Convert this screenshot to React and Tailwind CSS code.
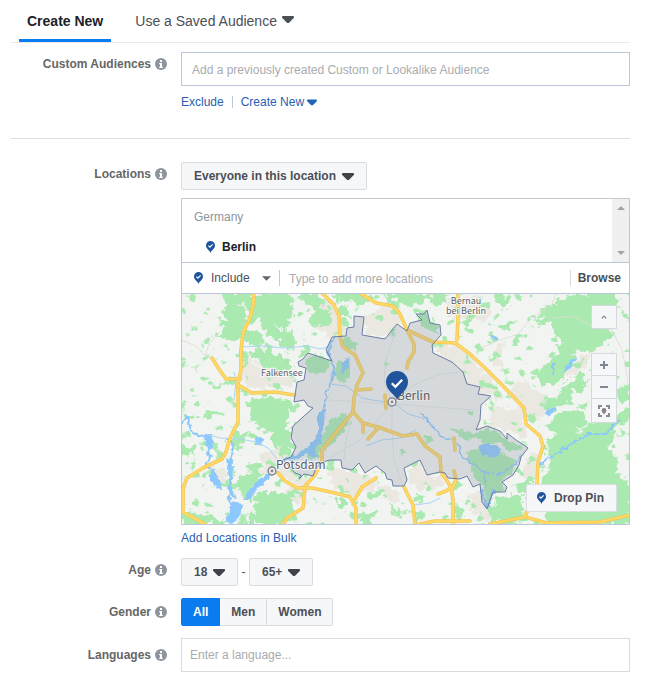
import React from "react";

const woods = [
  "222,293 290,293 293,306 291,320 282,327 268,326 258,321 252,324 248,310 240,303 226,306",
  "226,302 242,306 248,316 243,330 262,334 267,342 258,346 234,341 214,336 228,326 224,312",
  "262,322 276,328 292,330 298,346 288,353 278,342 264,330",
  "252,348 262,346 272,354 284,360 296,366 284,371 262,366 254,358",
  "296,293 318,293 326,302 320,310 326,320 318,328 308,322 314,308 300,300",
  "318,312 330,310 333,324 322,324",
  "248,400 262,396 286,400 296,406 290,412 250,410",
  "248,408 288,408 288,440 286,458 276,450 270,432 258,426 250,418",
  "291,456 306,462 314,474 298,478 286,468",
  "274,428 288,436 292,452 284,458 276,446",
  "241,473 256,466 264,472 256,484 250,500 246,500 236,486",
  "184,510 198,514 222,518 226,524 184,524",
  "182,444 194,448 190,458 182,456",
  "262,492 282,492 296,502 290,518 284,524 248,524 254,506",
  "232,432 246,434 240,448 232,444",
  "340,293 372,293 376,300 366,306 352,300 330,302",
  "340,304 352,310 350,316 340,318",
  "380,293 426,293 430,300 412,306 394,300",
  "428,296 448,293 446,300 434,306",
  "500,295 512,298 512,306 502,304 494,299",
  "508,322 516,324 506,330 498,328",
  "568,296 592,293 622,293 614,304 606,316 612,332 606,346 590,350 570,354 562,364 558,350 560,340 552,324 534,322 548,308",
  "554,356 574,354 568,370 560,384 550,388 532,374 544,366",
  "578,374 590,380 582,390 570,396 562,404 552,404 562,390",
  "544,400 554,396 560,404 550,412 542,408",
  "614,394 629,382 629,400 618,402",
  "545,442 560,432 584,428 600,420 629,410 629,420 616,428 608,446 620,462 618,476 629,484 629,524 545,524 542,484 548,464",
  "562,412 582,410 590,422 572,430 552,434 550,424",
  "478,432 496,430 508,438 518,446 500,446 482,444",
  "496,496 512,492 522,500 524,518 508,524 494,518",
  "514,484 532,478 530,492 520,494",
  "492,504 500,512 496,522 488,522",
  "453,507 466,510 464,518 454,516",
  "356,512 372,514 378,520 362,522",
  "390,506 398,508 402,516 392,516",
  "366,494 374,492 376,498 370,500",
  "416,494 420,494 424,500 418,502",
  "334,500 344,500 348,504 338,508",
];

const cityWoods = [
  "306,358 316,354 330,361 326,372 312,374 306,368",
  "340,338 348,338 358,344 356,350 348,350 340,344",
  "338,360 350,362 350,376 340,384 334,374",
  "330,420 346,412 350,424 334,442 324,452 322,438",
  "318,436 324,442 318,458 306,460 306,454",
  "391,330 396,328 395,337 390,336",
  "419,312 426,310 430,320 438,326 438,334 426,328 418,320",
  "450,428 462,430 476,434 490,428 484,438 464,440",
  "478,432 494,430 508,440 524,448 510,452 500,442 484,444",
  "466,452 480,448 500,452 516,460 512,474 500,482 504,490 494,492 486,504 484,488 474,476",
  "424,436 432,436 434,441 426,442",
  "470,410 474,412 472,416 468,414",
  "399,448 405,451 402,455",
  "384,362 388,364 385,368",
];

const towns = [
  "246,353 258,366 296,374 292,386 250,390 240,376",
  "310,293 330,300 346,324 346,335 330,338 318,328 320,310",
  "364,318 384,306 400,306 402,322 384,336 364,334",
  "446,300 480,296 490,312 484,322 450,316",
  "440,342 462,346 484,372 506,398 482,396 464,382 440,356",
  "516,378 548,396 548,410 532,424 520,410 510,392",
  "492,406 520,410 526,440 506,430 488,424",
  "260,454 284,444 300,474 312,484 304,490 284,476 262,472",
  "290,484 308,490 304,504 288,498",
  "206,470 224,466 228,484 214,486",
  "330,462 342,470 360,474 376,476 374,490 352,494 332,488",
  "408,468 420,462 426,476 440,476 446,488 424,490 410,482",
  "376,484 396,490 402,504 388,502",
  "478,490 492,510 486,522 472,512 468,494",
  "532,452 540,456 534,478 520,476 526,462",
  "495,340 504,342 500,368 494,366",
  "566,366 586,356 588,366 570,378",
];

const lakes = [
  "205,434 212,434 214,448 208,450",
  "210,468 216,474 222,486 218,490 210,480",
  "226,458 233,462 232,486 236,500 228,492 229,478",
  "230,502 243,504 240,516 232,524 226,520 230,512",
  "256,438 263,438 262,446 255,444",
  "300,452 314,442 318,432 318,414 325,408 324,424 322,440 314,450 316,458 306,454 290,462 292,456",
  "274,470 270,478 260,488 248,500 244,500 248,492 256,482 266,474",
  "478,446 488,443 498,446 502,452 494,457 482,455",
  "341,370 344,361 350,357 348,366 343,374",
  "552,362 555,362 554,374 552,374",
  "572,360 578,358 570,368 564,374 566,366",
  "546,412 555,406 556,410 549,416",
  "492,337 499,338 498,340 492,340",
];

const rivers = [
  "181,424 188,416 190,428 197,436 205,436 208,450 210,458 206,464 214,470",
  "228,440 233,442 231,456 230,464 231,478 229,500 236,510 234,522",
  "334,337 328,352 332,361 334,374 330,384",
  "283,460 294,458 306,450 314,442",
  "482,490 484,500 487,508 494,490",
  "540,464 552,456 562,450 574,442 590,434 606,434 614,424 619,420",
];

const streams = [
  "240,347 262,346 284,348 308,346 320,349 332,346",
  "205,434 220,438 240,439 256,442 268,448 278,460",
  "234,400 236,380 234,372",
  "330,384 346,386 354,392 362,398 372,400 386,402 398,406 408,414 422,418",
  "366,446 382,440 400,438 416,430",
  "330,376 338,374 342,370",
  "414,505 430,503 440,498",
];

const spree = [
  "422,414 430,424 440,436 452,440 458,444 462,456 476,466 484,472 486,486",
  "484,472 500,474 516,464 520,456",
  "330,384 326,396 324,410",
];

const motorways = [
  "254,293 253,306 250,318 243,333 241,350 241,370 238,384 238,405 238,422 230,438 226,452 222,459 203,468 187,478 183,488 183,512 205,524",
  "212,358 219,369 226,379 240,379",
  "240,386 252,393 275,392 294,395",
  "322,293 334,305 339,316 340,337 343,347 355,355 363,373 357,385 354,398 353,412 330,440 322,450 322,462 315,475 305,486 303,508 287,518 283,524",
  "357,390 371,389",
  "360,293 376,303 393,306 400,314 407,330 433,342 455,343 470,354 485,368 505,388 524,408 526,424 540,436 543,446 538,462 537,485 525,517 490,524",
  "525,517 547,523 600,522 630,515",
  "407,330 414,344 414,352 408,362 407,368",
  "458,295 458,318 457,340",
  "353,412 363,423 378,427 403,436 417,434 425,446 440,457 441,472 451,487 453,500 453,524",
  "363,423 363,432",
  "378,428 368,439",
  "454,471 456,480 452,490",
  "452,487 446,491 438,494",
  "404,487 413,505 415,523",
  "278,473 285,481 297,488 312,488 335,493 350,497 356,508 356,524",
  "355,499 362,487 376,478",
  "420,524 435,521 470,521",
  "385,395 386,408",
  "454,438 455,450",
];

const lanes = [
  "181,340 196,346 205,356 212,358",
  "205,356 210,342 220,332",
  "480,348 500,340 518,334 530,320 552,304 556,293",
  "552,318 572,316 592,326 612,330 622,350 628,380",
];

const streets = [
  "352,420 346,440 344,460",
  "392,404 392,430 394,460 402,484",
  "392,404 412,386 440,374 462,372",
  "392,404 420,406 446,408 476,410",
  "330,400 360,402 392,404",
  "392,404 384,380 386,360 396,330",
  "330,458 360,440 392,404",
];

const cityBorder =
  "332,337 326,350 332,361 308,353 303,359 298,362 299,366 306,368 304,380 297,382 294,402 304,400 308,406 313,408 293,426 291,438 296,447 291,457 283,460 290,467 295,473 301,475 299,479 304,474 313,476 316,468 323,462 330,460 341,460 342,468 352,470 359,463 365,473 376,466 385,473 387,479 392,480 393,486 404,486 407,480 404,468 420,460 427,475 440,472 445,473 448,478 460,479 467,476 473,487 480,484 482,502 487,509 493,492 505,492 507,487 502,482 513,475 519,465 521,457 528,448 516,440 507,433 507,439 500,431 487,426 476,430 480,420 481,405 491,396 485,395 478,394 480,387 467,384 463,372 452,362 433,353 432,345 441,335 440,325 430,323 427,310 424,314 416,314 422,320 410,323 407,331 397,324 385,339 362,335 364,317 354,316 354,327 347,328 346,336";

function Lines({ items, ...rest }) {
  return (
    <g fill="none" strokeLinejoin="round" strokeLinecap="round" {...rest}>
      {items.map((p) => (
        <polyline key={p} points={p} />
      ))}
    </g>
  );
}

function Shapes({ items, ...rest }) {
  return (
    <g {...rest}>
      {items.map((p) => (
        <polygon key={p} points={p} />
      ))}
    </g>
  );
}

function Town({ x, y }) {
  return (
    <g>
      <circle cx={x} cy={y} r="3.9" fill="#eceef0" stroke="#85878b" strokeWidth="1.5" />
      <circle cx={x} cy={y} r="1.4" fill="#85878b" />
    </g>
  );
}

function BerlinMap() {
  return (
    <svg
      role="img"
      aria-label="Map of Berlin"
      viewBox="182 294 447 230"
      preserveAspectRatio="xMidYMid slice"
      className="block h-[230px] w-full"
    >
      <defs>
        <filter id="rough" x="-5%" y="-5%" width="110%" height="110%">
          <feTurbulence type="fractalNoise" baseFrequency="0.13" numOctaves="3" seed="4" />
          <feDisplacementMap in="SourceGraphic" scale="15" xChannelSelector="R" yChannelSelector="G" />
        </filter>
        <filter id="shore" x="-5%" y="-5%" width="110%" height="110%" colorInterpolationFilters="sRGB">
          <feTurbulence type="fractalNoise" baseFrequency="0.2" numOctaves="2" seed="9" />
          <feDisplacementMap in="SourceGraphic" scale="6" xChannelSelector="R" yChannelSelector="G" />
        </filter>
        <filter id="groves" x="0" y="0" width="100%" height="100%" colorInterpolationFilters="sRGB">
          <feTurbulence type="fractalNoise" baseFrequency="0.08 0.1" numOctaves="3" seed="21" />
          <feColorMatrix values="0 0 0 0 0.667  0 0 0 0 0.918  0 0 0 0 0.694  14 0 0 0 -8.7" />
        </filter>
      </defs>
      <rect x="181" y="293" width="449" height="232" fill="#f2f4f2" />
      <Shapes items={towns} fill="#ebe7e1" filter="url(#rough)" />
      <rect x="181" y="293" width="449" height="232" filter="url(#groves)" />
      <Shapes items={woods} fill="#aaeab1" filter="url(#rough)" />
      <polygon points={cityBorder} fill="#f1f2f0" />
      <Shapes items={cityWoods} fill="#aaeab1" filter="url(#shore)" />
      <Lines items={lanes} stroke="#dedbd6" strokeWidth="0.8" />
      <Lines items={streets} stroke="#dddcdb" strokeWidth="0.7" />
      <Shapes items={lakes} fill="#8cc8fb" filter="url(#shore)" />
      <Lines items={rivers} stroke="#8cc8fb" strokeWidth="2.2" filter="url(#shore)" />
      <Lines items={spree} stroke="#8cc8fb" strokeWidth="1.7" filter="url(#shore)" />
      <Lines items={streams} stroke="#a9d5f8" strokeWidth="1" />
      <Lines items={motorways} stroke="#f3c552" strokeWidth="3.6" />
      <Lines items={motorways} stroke="#ffd866" strokeWidth="2.2" />
      <polygon points={cityBorder} fill="#8898a6" fillOpacity="0.27" stroke="#6a7da3" strokeWidth="1" strokeLinejoin="round" />
      <Town x={392} y={402} />
      <Town x={272} y={471} />
      <g
        fill="#5b5e68"
        stroke="#fff"
        strokeOpacity="0.75"
        strokeWidth="2"
        paintOrder="stroke"
        fontFamily="'Noto Sans CJK SC', 'Noto Sans', sans-serif"
      >
        <text x="397" y="400" fontSize="12" strokeOpacity="0.3">Berlin</text>
        <text x="276" y="469" fontSize="12">Potsdam</text>
        <text x="261" y="376" fontSize="9">Falkensee</text>
        <text x="466" y="304" fontSize="9" textAnchor="middle">Bernau</text>
        <text x="466" y="314" fontSize="9" textAnchor="middle">bei Berlin</text>
      </g>
      <path d="M397 400c-2-6-11-9-11-18a11 11 0 0 1 22 0c0 9-9 12-11 18z" fill="#20549c" />
      <path d="M391.800 383.300l3.600 3.600 6.800-7.200" fill="none" stroke="#fff" strokeWidth="2.300" />
    </svg>
  );
}

function Caret({ className = "" }) {
  return (
    <svg viewBox="0 0 12 7" aria-hidden="true" className={`h-[7px] w-3 shrink-0 fill-current ${className}`}>
      <path d="M1 0h10q1 0 1 1v.8L7.300 6.400q-1.300 1-2.600 0L0 1.800V1q0-1 1-1z" />
    </svg>
  );
}

function Pin() {
  return (
    <svg viewBox="0 0 9 12" aria-hidden="true" className="h-3 w-[9px] shrink-0">
      <path d="M4.500 12C3.600 9 0 8 0 4.500a4.500 4.500 0 0 1 9 0C9 8 5.400 9 4.500 12z" fill="#20549c" />
      <path d="M2.400 4.700l1.500 1.500 2.700-2.900" fill="none" stroke="#fff" strokeWidth="1.200" />
    </svg>
  );
}

function Info() {
  return (
    <svg viewBox="0 0 12 12" aria-hidden="true" className="h-3 w-3 shrink-0">
      <circle cx="6" cy="6" r="6" fill="#8d949e" />
      <path d="M5 2h2v2H5zM4.200 5H7v3.700h.8V10H4.200V8.700H5V6.200h-.8z" fill="#fff" />
    </svg>
  );
}

function Row({ label, htmlFor, offset = "pt-1", children }) {
  const Tag = htmlFor ? "label" : "div";
  return (
    <div className="flex gap-[14px]">
      <div className={`w-[156px] shrink-0 ${offset}`}>
        <Tag htmlFor={htmlFor} className="flex items-center justify-end gap-1 font-bold leading-4 text-[#666]">
          {label}
          <Info />
        </Tag>
      </div>
      <div className="min-w-0 flex-1">{children}</div>
    </div>
  );
}

function Dropdown({ id, label, options, width }) {
  return (
    <span className="relative inline-flex text-[#4b4f56]">
      <select
        id={id}
        aria-label={label}
        className={`h-7 appearance-none rounded-[2px] border border-[#d9dbe0] bg-[#f6f7f9] pl-3 font-bold ${width}`}
      >
        {options.map((o) => (
          <option key={o}>{o}</option>
        ))}
      </select>
      <Caret className="pointer-events-none absolute right-[13px] top-[11px] text-[#3f434a]" />
    </span>
  );
}

export default function App() {
  return (
    <main className="bg-white pb-[18px] pl-[11px] pr-[15px] font-['Liberation_Sans',Arial,sans-serif] text-[12px] leading-4 text-[#4b4f56]">
      <nav className="flex h-[43px] items-end gap-4 border-b border-[#e9eaec] pl-2 text-[14px]">
        <button className="h-[42px] border-b-[3px] border-[#0a7cf0] px-2 pt-[2px] font-bold text-[#1d2129]">
          Create New
        </button>
        <button className="flex h-[42px] items-center gap-[5px] border-b-[3px] border-transparent px-2 pt-[2px]">
          Use a Saved Audience
          <Caret className="mb-[2px]" />
        </button>
      </nav>

      <section className="border-b border-[#dcdee3] pb-7 pt-[9px]">
        <Row label="Custom Audiences" htmlFor="audiences">
          <input
            id="audiences"
            placeholder="Add a previously created Custom or Lookalike Audience"
            className="block h-[34px] w-full border border-[#bdc7dc] px-[10px] pt-[2px] placeholder:text-[#a9abaf]"
          />
          <div className="mt-2 flex h-4 items-center text-[#2a5db0]">
            <a href="#exclude">Exclude</a>
            <span className="ml-2 mr-2 h-3 border-l border-[#bdc7dc]" />
            <button className="flex items-center gap-[3px]">
              Create New
              <Caret className="h-[6px] w-[10px] text-[#1f66b8]" />
            </button>
          </div>
        </Row>
      </section>

      <section className="flex flex-col gap-3 pt-[23px]">
        <Row label="Locations" htmlFor="scope">
          <Dropdown id="scope" options={["Everyone in this location", "People who live here"]} width="w-[186px]" />
          <div className="mt-2 border border-[#bdc7dc] border-t-[#c6c9ce]">
            <div className="flex h-[63px]">
              <ul className="flex-1 pl-3 pt-[10px]">
                <li className="text-[#90949c]">
                  Germany
                  <ul className="pl-3 pt-[14px]">
                    <li className="flex items-center gap-[7px] font-bold text-[#1d2129]">
                      <Pin />
                      Berlin
                    </li>
                  </ul>
                </li>
              </ul>
              <div className="flex w-[17px] flex-col items-center justify-between bg-[#f0f0f0] py-[7px] text-[#a3a3a3]">
                <svg viewBox="0 0 8 4" className="h-1 w-2 fill-current" aria-hidden="true">
                  <path d="M0 4h8L4 0z" />
                </svg>
                <svg viewBox="0 0 8 4" className="h-1 w-2 fill-current" aria-hidden="true">
                  <path d="M0 0h8L4 4z" />
                </svg>
              </div>
            </div>
            <div className="flex h-8 items-center border-y border-[#bdc7dc] pl-3 pr-2">
              <Pin />
              <span className="relative inline-flex">
                <select aria-label="Include or exclude" className="h-5 w-[68px] appearance-none bg-transparent pl-2">
                  <option>Include</option>
                  <option>Exclude</option>
                </select>
                <svg
                  viewBox="0 0 10 5"
                  aria-hidden="true"
                  className="pointer-events-none absolute right-0 top-2 h-[5px] w-[9px] fill-[#606770]"
                >
                  <path d="M0 0h10L5 5z" />
                </svg>
              </span>
              <span className="ml-2 h-4 border-l border-[#c3c9d6]" />
              <input
                aria-label="Add locations"
                placeholder="Type to add more locations"
                className="h-5 min-w-0 flex-1 px-[9px] pt-[2px] placeholder:text-[#a9abaf]"
              />
              <button className="h-4 border-l border-[#d5d8de] pl-[7px] font-bold leading-4 text-[#4b4f56]">Browse</button>
            </div>
            <div className="relative overflow-hidden">
              <BerlinMap />
              <div className="absolute right-3 top-[11px] border border-[#d5d8de]">
                <button aria-label="Collapse map" className="flex h-[22px] w-6 items-center justify-center bg-[#f6f7f9]">
                  <svg viewBox="0 0 6 4" className="h-1 w-[6px]" aria-hidden="true">
                    <path d="M.7 3.300L3 1l2.300 2.300" fill="none" stroke="#7f8794" strokeWidth="1.200" />
                  </svg>
                </button>
              </div>
              <div className="absolute right-3 top-[59px] divide-y divide-[#d5d8de] border border-[#d5d8de]">
                <button aria-label="Zoom in" className="flex h-[22px] w-6 items-center justify-center bg-[#f6f7f9]">
                  <svg viewBox="0 0 8 8" className="h-2 w-2" aria-hidden="true">
                    <path d="M3 0h2v3h3v2H5v3H3V5H0V3h3z" fill="#7f8794" />
                  </svg>
                </button>
                <button aria-label="Zoom out" className="flex h-[23px] w-6 items-center justify-center bg-[#f6f7f9]">
                  <svg viewBox="0 0 8 2" className="h-[2px] w-2" aria-hidden="true">
                    <path d="M0 0h8v2H0z" fill="#7f8794" />
                  </svg>
                </button>
                <button aria-label="Fit locations" className="flex h-[23px] w-6 items-center justify-center bg-[#f6f7f9]">
                  <svg viewBox="0 0 12 12" className="h-3 w-3" aria-hidden="true">
                    <path d="M1 4V1h3M8 1h3v3M11 8v3H8M4 11H1V8" fill="none" stroke="#8d8a90" strokeWidth="2" />
                    <path d="M6 9.500C5.600 8.200 3.600 7.400 3.600 5.400a2.400 2.400 0 0 1 4.800 0C8.400 7.400 6.400 8.200 6 9.500z" fill="#8a828a" />
                  </svg>
                </button>
              </div>
              <button className="absolute bottom-3 right-3 flex h-7 items-center gap-2 rounded-[2px] border border-[#dcdee3] bg-[#f6f7f9] pl-[10px] pr-3 font-bold text-[#4b4f56]">
                <Pin />
                Drop Pin
              </button>
            </div>
          </div>
          <a href="#bulk" className="mt-[5px] block w-fit text-[#2a5db0]">
            Add Locations in Bulk
          </a>
        </Row>

        <Row label="Age" htmlFor="age-min">
          <div className="flex items-center">
            <Dropdown id="age-min" options={["18", "21", "25"]} width="w-[57px]" />
            <span className="w-[11px] text-center">-</span>
            <Dropdown label="Maximum age" options={["65+", "54", "44"]} width="w-16" />
          </div>
        </Row>

        <Row label="Gender" offset="pt-[6px]">
          <div role="radiogroup" aria-label="Gender" className="flex w-fit font-bold">
            {["All", "Men", "Women"].map((g) => (
              <label
                key={g}
                className="relative -ml-px flex h-7 items-center border border-[#d9dbe0] bg-[#f6f7f9] px-[11px] first:ml-0 first:rounded-l-[2px] last:rounded-r-[2px] has-checked:z-10 has-checked:border-[#0a7cf0] has-checked:bg-[#0a7cf0] has-checked:text-white"
              >
                <input type="radio" name="gender" defaultChecked={g === "All"} className="sr-only" />
                {g}
              </label>
            ))}
          </div>
        </Row>

        <Row label="Languages" htmlFor="languages" offset="pt-[9px]">
          <input
            id="languages"
            placeholder="Enter a language..."
            className="block h-[34px] w-full border border-[#d9dbe0] px-2 placeholder:text-[#a9abaf]"
          />
        </Row>
      </section>
    </main>
  );
}
